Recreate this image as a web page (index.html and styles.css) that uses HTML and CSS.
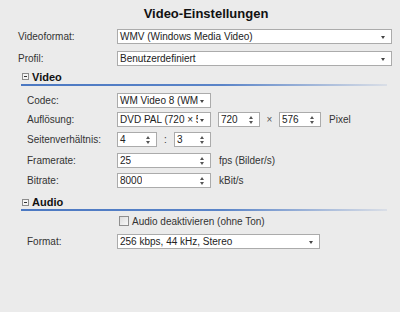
FILE: index.html
```html
<!DOCTYPE html>
<html lang="de">
<head>
<meta charset="utf-8">
<title>Video-Einstellungen</title>
<link rel="stylesheet" href="styles.css">
</head>
<body>
<div class="dialog">
  <div class="title">Video-Einstellungen</div>

  <div class="row top">
    <span class="label">Videoformat:</span>
    <div class="select w-full"><span class="val">WMV (Windows Media Video)</span><span class="arrow"></span></div>
  </div>
  <div class="row top">
    <span class="label">Profil:</span>
    <div class="select w-full"><span class="val">Benutzerdefiniert</span><span class="arrow"></span></div>
  </div>

  <div class="section">
    <span class="toggle"></span><span class="sec-title">Video</span>
  </div>
  <div class="rule"></div>

  <div class="group video">
    <div class="row sub h19">
      <span class="label">Codec:</span>
      <div class="select w-mid"><span class="val">WM Video 8 (WMV 8)</span><span class="arrow"></span></div>
    </div>
    <div class="row sub h19">
      <span class="label">Auflösung:</span>
      <div class="select w-mid"><span class="val">DVD PAL (720 × 576)</span><span class="arrow"></span></div>
      <div class="spin w-res ml8"><span class="val">720</span><span class="updown"></span></div>
      <span class="sep">×</span>
      <div class="spin w-res"><span class="val">576</span><span class="updown"></span></div>
      <span class="unit">Pixel</span>
    </div>
    <div class="row sub h21">
      <span class="label">Seitenverhältnis:</span>
      <div class="spin w-ratio"><span class="val">4</span><span class="updown"></span></div>
      <span class="colon">:</span>
      <div class="spin w-ratio2"><span class="val">3</span><span class="updown"></span></div>
    </div>
    <div class="row sub">
      <span class="label">Framerate:</span>
      <div class="spin w-mid"><span class="val">25</span><span class="updown"></span></div>
      <span class="unit">fps (Bilder/s)</span>
    </div>
    <div class="row sub h21">
      <span class="label">Bitrate:</span>
      <div class="spin w-mid"><span class="val">8000</span><span class="updown"></span></div>
      <span class="unit">kBit/s</span>
    </div>
  </div>

  <div class="section audio-sec">
    <span class="toggle"></span><span class="sec-title">Audio</span>
  </div>
  <div class="rule"></div>

  <div class="group">
    <div class="row sub">
      <span class="label"></span>
      <span class="checkbox"></span><span class="check-text">Audio deaktivieren (ohne Ton)</span>
    </div>
    <div class="row sub">
      <span class="label">Format:</span>
      <div class="select w-format"><span class="val">256 kbps, 44 kHz, Stereo</span><span class="arrow"></span></div>
    </div>
  </div>
</div>
</body>
</html>
```

FILE: styles.css
```css
html, body {
  margin: 0;
  padding: 0;
  background: #ebebeb;
}

body {
  font-family: "Liberation Sans", Arial, sans-serif;
  font-size: 10px;
  color: #333;
  width: 400px;
  height: 312px;
  overflow: hidden;
}

.dialog {
  padding-top: 3px;
}

.title {
  height: 22px;
  line-height: 22px;
  text-align: center;
  font-size: 13px;
  font-weight: bold;
  color: #111;
  padding-left: 12px;
}

.row {
  display: flex;
  align-items: center;
}

.row.top {
  height: 22px;
  padding-left: 18px;
}

.row.top .label {
  width: 99px;
}

.row.sub {
  height: 20px;
  padding-left: 27px;
}

.row.sub.h19 { height: 19px; }
.row.sub.h21 { height: 21px; }

.row.sub .label {
  width: 90px;
  flex: none;
}

.label {
  white-space: nowrap;
}

.section {
  display: flex;
  align-items: center;
  height: 15px;
  padding-left: 22px;
}

.audio-sec {
  height: 14px;
  padding-top: 4px;
}

.toggle {
  position: relative;
  width: 7px;
  height: 7px;
  border: 1px solid #8c8c8c;
  background: #f4f4f4;
  box-sizing: border-box;
  margin-right: 3px;
  flex: none;
}

.toggle::after {
  content: "";
  position: absolute;
  left: 1px;
  top: 2px;
  width: 3px;
  height: 1px;
  background: #333;
}

.sec-title {
  font-weight: bold;
  font-size: 11px;
  color: #111;
}

.rule {
  margin-left: 21px;
  width: 366px;
  height: 2px;
  background: linear-gradient(to right, #4b78c2 0%, #5a84c8 55%, rgba(120, 150, 205, 0.15) 100%);
}

.group.video {
  margin-top: 5px;
}

.select, .spin {
  position: relative;
  height: 15px;
  box-sizing: border-box;
  border: 1px solid #ababab;
  background: #fff;
  display: flex;
  align-items: center;
  overflow: hidden;
  flex: none;
}

.val {
  padding-left: 2px;
  white-space: nowrap;
  overflow: hidden;
  color: #222;
}

.select .val {
  padding-right: 12px;
}

.arrow {
  position: absolute;
  right: 6px;
  top: 6px;
  width: 0;
  height: 0;
  border-left: 2.5px solid transparent;
  border-right: 2.5px solid transparent;
  border-top: 3px solid #444;
}

.select::before {
  content: "";
  position: absolute;
  right: 0;
  top: 0;
  bottom: 0;
  width: 12px;
  background: #fff;
}

.updown {
  position: absolute;
  right: 5px;
  top: 2px;
  width: 5px;
  height: 9px;
}

.updown::before,
.updown::after {
  content: "";
  position: absolute;
  left: 0;
  width: 0;
  height: 0;
  border-left: 2.5px solid transparent;
  border-right: 2.5px solid transparent;
}

.updown::before {
  top: 1px;
  border-bottom: 3px solid #555;
}

.updown::after {
  bottom: 0;
  border-top: 3px solid #555;
}

.w-full { width: 275px; }
.w-mid { width: 94px; }
.w-res { width: 42px; }
.w-ratio { width: 40px; }
.w-ratio2 { width: 37px; }
.w-format { width: 203px; }

.ml8 { margin-left: 7px; }

.sep {
  width: 19px;
  text-align: center;
  color: #555;
}

.colon {
  width: 17px;
  text-align: center;
}

.unit {
  margin-left: 8px;
  white-space: nowrap;
}

.checkbox {
  width: 10px;
  height: 10px;
  box-sizing: border-box;
  border: 1px solid #8e8e8e;
  background: linear-gradient(135deg, #dcdcdc, #f8f8f8);
  margin-left: 2px;
  margin-right: 3px;
  flex: none;
}

.check-text {
  white-space: nowrap;
}
```
